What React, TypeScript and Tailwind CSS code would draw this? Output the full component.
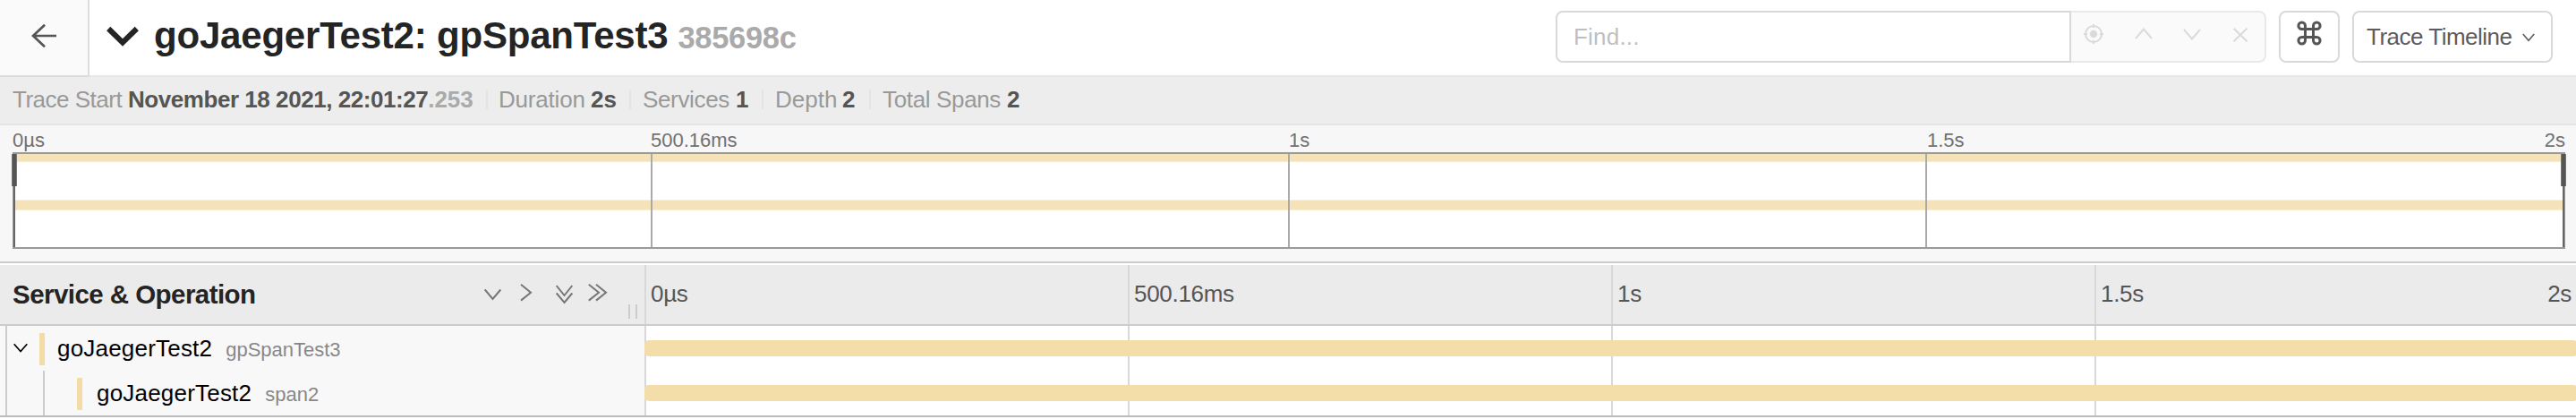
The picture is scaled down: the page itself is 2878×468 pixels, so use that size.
import type { ReactNode } from "react";

function Stroke({ w, h, d, width = 2, className = "" }: { w: number; h: number; d: string; width?: number; className?: string }) {
  return (
    <svg width={w} height={h} viewBox={`0 0 ${w} ${h}`} fill="none" stroke="currentColor" strokeWidth={width} className={`block shrink-0 ${className}`}>
      <path d={d} />
    </svg>
  );
}

function SummaryItem({ label, className, labelClass, children }: { label: string; className: string; labelClass: string; children: ReactNode }) {
  return (
    <li className={`flex shrink-0 whitespace-pre ${className}`}>
      <span className={`text-[#999] ${labelClass}`}>{label}</span>
      <strong className="font-bold text-[#555]">{children}</strong>
    </li>
  );
}

function Divider() {
  return <li className="mt-[14px] h-[22px] w-[2px] shrink-0 bg-[#e4e4e4]" />;
}

function Header() {
  return (
    <header className="flex h-[86px]">
      <a className="flex w-[100px] shrink-0 border-r-2 border-b-2 border-[#ddd] bg-[#fafafa] pt-[26px] pl-[34px] text-[#555]">
        <Stroke w={30} h={28} width={2.7} d="M29 14H3M16 1.8L3 14L16 26.2" />
      </a>
      <div className="flex flex-1 border-b-2 border-[#e8e8e8]">
        <Stroke w={36} h={24} width={6} className="mt-[29px] ml-[19px] text-[#242424]" d="M2.2 3L18 18.5L33.8 3" />
        <h1 className="ml-[17px] w-[1566px] shrink-0 text-[42px] leading-[79px] font-bold tracking-[-0.2px] whitespace-pre text-[#242424]">
          goJaegerTest2: gpSpanTest3
          <small className="ml-[11px] text-[34.5px] tracking-[-0.3px] text-[#aaa]">385698c</small>
        </h1>
        <div className="mt-[12px] flex h-[58px]">
          <div className="w-[576px] rounded-l-[8px] border-2 border-[#d9d9d9] bg-white pl-[18px] text-[26px] leading-[54px] tracking-[0.2px] text-[#bfbfbf]">
            Find...
          </div>
          <div className="flex w-[218px] rounded-r-[8px] border-2 border-l-0 border-[#e9e9e9] bg-[#fafafa] text-[#dadada]">
            <svg width="24" height="24" viewBox="0 0 24 24" fill="none" stroke="currentColor" strokeWidth="2" className="mt-[12px] ml-[13px] block">
              <circle cx="12" cy="12" r="9" />
              <circle cx="12" cy="12" r="4.2" fill="currentColor" stroke="none" />
              <path d="M12 1v4M12 19v4M1 12h4M19 12h4" />
            </svg>
            <Stroke w={20} h={14} className="mt-[16px] ml-[34px]" d="M1 13L10 2.5L19 13" />
            <Stroke w={20} h={14} className="mt-[18px] ml-[34px]" d="M1 1L10 11.5L19 1" />
            <Stroke w={18} h={16} className="mt-[17px] ml-[35px]" d="M1.5 .7L16.5 15.3M16.5 .7L1.5 15.3" />
          </div>
          <button className="ml-[14px] flex w-[68px] rounded-[8px] border-2 border-[#d9d9d9] bg-white pt-[9px] pl-[18px] text-[#555]">
            <Stroke
              w={28}
              h={28}
              width={3}
              d="M9.5 9.5H18.5V18.5H9.5ZM9.5 9.5H5.7A3.8 3.8 0 1 1 9.5 5.7ZM18.5 9.5V5.7A3.8 3.8 0 1 1 22.3 9.5ZM18.5 18.5H22.3A3.8 3.8 0 1 1 18.5 22.3ZM9.5 18.5V22.3A3.8 3.8 0 1 1 5.7 18.5Z"
            />
          </button>
          <button className="ml-[14px] flex w-[224px] rounded-[8px] border-2 border-[#d9d9d9] bg-white pl-[14px] text-[26px] leading-[54px] tracking-[-0.5px] text-[#5c5c5c]">
            <span className="w-[174px] text-left">Trace Timeline</span>
            <Stroke w={14} h={10} width={1.6} className="mt-[23px]" d="M.7 1L7 8.2L13.3 1" />
          </button>
        </div>
      </div>
    </header>
  );
}

function Summary() {
  return (
    <ul className="flex h-[54px] border-b-2 border-[#e4e4e4] bg-[#ededed] text-[26px] leading-[50px]">
      <SummaryItem label="Trace Start " className="w-[543px] pl-[14px]" labelClass="w-[129px] tracking-[-0.5px]">
        <span className="tracking-[-0.45px]">November 18 2021, 22:01:27</span>
        <span className="text-[#aaa]">.253</span>
      </SummaryItem>
      <Divider />
      <SummaryItem label="Duration " className="w-[158px] pl-[12px]" labelClass="w-[103px] tracking-[-0.2px]">2s</SummaryItem>
      <Divider />
      <SummaryItem label="Services " className="w-[146px] pl-[13px]" labelClass="w-[104px] tracking-[-0.35px]">1</SummaryItem>
      <Divider />
      <SummaryItem label="Depth " className="w-[118px] pl-[13px]" labelClass="w-[75px]">2</SummaryItem>
      <Divider />
      <SummaryItem label="Total Spans " className="w-[180px] pl-[13px]" labelClass="w-[139px] tracking-[-0.35px]">2</SummaryItem>
    </ul>
  );
}

function Minimap() {
  return (
    <section className="h-[154px] border-b-2 border-[#ccc] bg-[#f7f7f7] pl-[14px]">
      <div className="flex h-[30px] w-[2852px] text-[22px] leading-[33px] text-[#717171]">
        <span className="w-[713px]">0µs</span>
        <span className="w-[712px]">500.16ms</span>
        <span className="w-[713px] pl-px">1s</span>
        <span className="flex-1 pl-px">1.5s</span>
        <span>2s</span>
      </div>
      <div className="relative h-[108px] w-[2852px] border-y-2 border-[#999] bg-white">
        <div className="h-[8px] bg-[#f4e2b8]" />
        <div className="h-px bg-[#f8ecd0]" />
        <div className="mt-[42px] h-px bg-[#faf1dc]" />
        <div className="h-[10px] bg-[#f4e2b8]" />
        <div className="h-px bg-[#f8ecd0]" />
        <div className="absolute inset-y-0 left-[3px] flex">
          <div className="w-[712px] border-r-2 border-[#aaa]" />
          <div className="w-[712px] border-r-2 border-[#aaa]" />
          <div className="w-[712px] border-r-2 border-[#aaa]" />
        </div>
        <div className="absolute inset-y-0 left-0 w-[3px] border-l border-[#999] bg-[#666]" />
        <div className="absolute inset-y-0 right-0 w-[3px] border-r border-[#999] bg-[#666]" />
        <div className="absolute top-0 -left-px h-[36px] w-[6px] border-x border-[#777] bg-[#555]" />
        <div className="absolute top-0 -right-px h-[36px] w-[6px] border-x border-[#777] bg-[#555]" />
      </div>
    </section>
  );
}

function Ticks({ labels }: { labels?: string[] }) {
  return (
    <>
      {[0, 1, 2, 3].map((i) => (
        <div key={i} className="w-[540px] shrink-0 border-l-2 border-[#d8d8d8] pl-[5px]">
          {labels?.[i]}
        </div>
      ))}
    </>
  );
}

function TimelineHeader() {
  return (
    <div className="mt-[2px] flex h-[68px] overflow-hidden border-b-2 border-[#ccc] bg-[#ebebeb]">
      <div className="flex w-[720px] shrink-0 text-[#777]">
        <h3 className="w-[541px] pl-[14px] text-[29.5px] leading-[66px] font-bold tracking-[-0.55px] text-[#242424]">Service &amp; Operation</h3>
        <Stroke w={20} h={14} className="mt-[26px]" d="M.7 1.5L9.5 12L18.3 1.5" />
        <Stroke w={14} h={20} className="mt-[21px] ml-[20px]" d="M1 .8L12 9.7L1 18.6" />
        <Stroke w={20} h={22} className="mt-[22px] ml-[26px]" d="M.7 1L9.5 12L18.3 1M.7 9.5L9.5 20L18.3 9.5" />
        <Stroke w={22} h={20} className="mt-[21px] ml-[16px]" d="M.8 .8L12 9.7L.8 18.6M9 .8L20 9.7L9 18.6" />
        <div className="mt-[44px] ml-[23px] h-[16px] w-[10px] border-x-2 border-[#ccc]" />
      </div>
      <div className="relative flex w-[2158px] text-[26px] leading-[65px] tracking-[-0.3px] text-[#555]">
        <Ticks labels={["0µs", "500.16ms", "1s", "1.5s"]} />
        <span className="absolute right-[5px]">2s</span>
      </div>
    </div>
  );
}

function SpanRow({ service, operation, nested = false }: { service: string; operation: string; nested?: boolean }) {
  return (
    <div className="flex h-[50px] overflow-hidden">
      <div className="flex w-[720px] shrink-0 bg-[#f8f8f8] pl-[6px]">
        <div className="w-[2px] bg-[#ccc]" />
        {nested ? (
          <div className="ml-[40px] w-[38px] border-l-2 border-[#ccc]" />
        ) : (
          <Stroke w={16} h={12} width={1.7} className="mt-[19px] mr-[13px] ml-[7px] text-black" d="M.7 1.2L8 9.5L15.3 1.2" />
        )}
        <div className="mt-[8px] h-[36px] w-[6px] bg-[#f4dca7]" />
        <div className={`${nested ? "ml-[16px]" : "ml-[14px]"} text-[26px] leading-[50px] tracking-[0.2px] whitespace-nowrap text-black`}>
          {service}
          <small className="ml-[15px] text-[22px] tracking-normal text-[#888]">{operation}</small>
        </div>
      </div>
      <div className="relative flex w-[2158px]">
        <Ticks />
        <div className="absolute top-[16px] left-0 h-[18px] w-[2160px] rounded-[5px] bg-[#f3dda8]" />
      </div>
    </div>
  );
}

export default function App() {
  return (
    <div className="h-[468px] w-[2878px] overflow-hidden bg-white [font-family:'Liberation_Sans',Arial,sans-serif]">
      <Header />
      <Summary />
      <Minimap />
      <TimelineHeader />
      <div className="border-b-2 border-[#bbb]">
        <SpanRow service="goJaegerTest2" operation="gpSpanTest3" />
        <SpanRow service="goJaegerTest2" operation="span2" nested />
      </div>
    </div>
  );
}
